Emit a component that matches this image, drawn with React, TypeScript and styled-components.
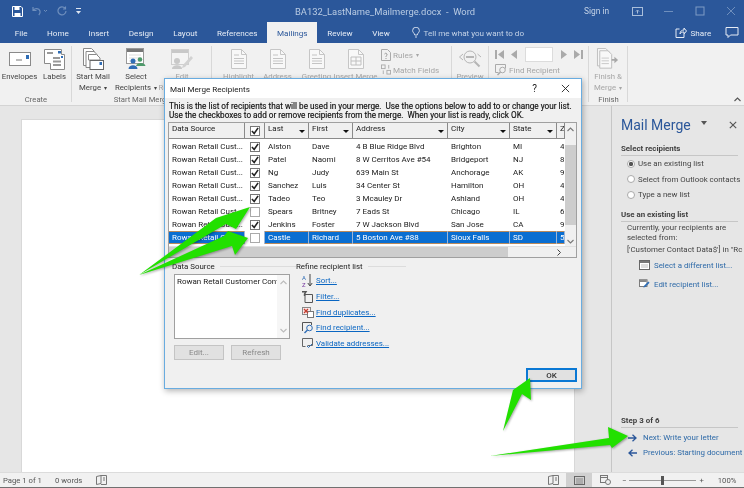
import React from "react";
import styled, { createGlobalStyle } from "styled-components";

const Global = createGlobalStyle`
  html, body { margin: 0; padding: 0; background: #fff; overflow: hidden; }
  * { box-sizing: border-box; }
`;

const Page = styled.div`
  position: relative;
  width: 744px;
  height: 488px;
  overflow: hidden;
  display: flex;
  flex-direction: column;
  font-family: Roboto, "Open Sans", sans-serif;
  font-size: 8px;
  color: #444;
  background: #fff;
  filter: blur(0.25px);
`;

/* ---------- title bar ---------- */
const TitleBar = styled.div`
  height: 22px;
  flex: none;
  background: #2b579a;
  display: flex;
  align-items: center;
  padding: 0 0 0 12px;
  color: #b9cbe3;
  font-size: 9.4px;
`;
const Quick = styled.div`
  display: flex;
  align-items: center;
  gap: 9px;
  width: 283px;
  flex: none;
`;
const DocName = styled.div`
  width: 289px;
  flex: none;
  white-space: pre;
`;
const WindowTools = styled.div`
  display: flex;
  align-items: center;
`;
const SignIn = styled.span`
  width: 38px;
  font-size: 8.4px;
  color: #c3d2e7;
`;
const WinBtn = styled.span`
  width: 31px;
  display: flex;
  justify-content: center;
`;

/* ---------- tabs ---------- */
const TabBar = styled.div`
  height: 21px;
  flex: none;
  background: #2b579a;
  display: flex;
  align-items: stretch;
  padding-left: 5px;
  color: #e6ecf5;
  font-size: 8.1px;
`;
const Tab = styled.div<{ $active?: boolean }>`
  padding: 0 9.8px;
  display: flex;
  align-items: center;
  background: ${(p) => (p.$active ? "#f1f1f1" : "transparent")};
  color: ${(p) => (p.$active ? "#2b579a" : "inherit")};
`;
const Tell = styled.div`
  display: flex;
  align-items: center;
  gap: 4px;
  margin-left: 12px;
  width: 263px;
  flex: none;
  color: #c3d2e7;
`;
const TopAction = styled.div`
  display: flex;
  align-items: center;
  gap: 4px;
  margin-right: 14px;
  color: #e6ecf5;
`;

/* ---------- ribbon ---------- */
const Ribbon = styled.div`
  height: 63px;
  flex: none;
  background: #f1f1f1;
  border-bottom: 1px solid #d4d4d4;
  display: flex;
  position: relative;
`;
const Group = styled.div<{ $w: number }>`
  width: ${(p) => p.$w}px;
  flex: none;
  position: relative;
  display: flex;
  flex-direction: column;
  padding-top: 4px;
  &::after {
    content: "";
    position: absolute;
    right: 0;
    top: 3px;
    bottom: 3px;
    width: 1px;
    background: #d8d8d8;
  }
`;
const GroupItems = styled.div<{ $inset?: number }>`
  flex: 1;
  min-height: 0;
  display: flex;
  align-items: flex-start;
  padding-left: ${(p) => p.$inset ?? 0}px;
`;
const GroupLabel = styled.div`
  height: 12px;
  flex: none;
  line-height: 14px;
  text-align: center;
  font-size: 7.7px;
  color: #666;
  white-space: nowrap;
`;
const RibbonBtn = styled.div<{ $w: number; $off?: boolean }>`
  width: ${(p) => p.$w}px;
  flex: none;
  display: flex;
  flex-direction: column;
  align-items: center;
  text-align: center;
  font-size: 7.8px;
  color: ${(p) => (p.$off ? "#a6a6a6" : "#444")};
  white-space: nowrap;
`;
const BtnText = styled.div`
  line-height: 11px;
`;
const BtnIcon = styled.div`
  height: 24px;
  display: flex;
  align-items: center;
`;
const Mini = styled.div`
  display: flex;
  align-items: center;
  gap: 2px;
  height: 15px;
  color: #a6a6a6;
  font-size: 8.1px;
  white-space: nowrap;
`;
const MiniCol = styled.div`
  display: flex;
  flex-direction: column;
  padding-left: 6px;
`;
const NavRow = styled.div`
  display: flex;
  align-items: center;
  gap: 6px;
  height: 14px;
  margin-bottom: 1px;
  color: #aaa;
`;
const RecordBox = styled.div`
  width: 28px;
  height: 15px;
  flex: none;
  background: #fff;
  border: 1px solid #dcdcdc;
`;
const Caption = styled.span`
  font-size: 6px;
  line-height: 8px;
  margin-left: 1px;
`;
const Collapse = styled.div`
  position: absolute;
  right: 3px;
  bottom: 1px;
`;

/* ---------- workspace ---------- */
const Workspace = styled.div`
  flex: 1;
  min-height: 0;
  display: flex;
  background: #e6e6e6;
`;
const DocArea = styled.div`
  width: 612px;
  flex: none;
  padding: 13px 36px 0 21px;
  border-right: 1px solid #c6c6c6;
`;
const Sheet = styled.div`
  height: 100%;
  background: #fff;
  border: 1px solid #d8d8d8;
  border-bottom: none;
`;
const Pane = styled.div`
  flex: 1;
  min-width: 0;
  padding: 8px 6px 12px 9px;
  display: flex;
  flex-direction: column;
  color: #444;
  font-size: 7.9px;
  white-space: nowrap;
  overflow: hidden;
`;
const PaneHead = styled.div`
  display: flex;
  align-items: center;
  height: 22px;
  color: #2b579a;
  font-size: 14px;
  margin-bottom: 7px;
`;
const PaneCaret = styled.span`
  margin: 0 0 4px 10px;
  width: 0;
  height: 0;
  border: 3.5px solid transparent;
  border-top: 4px solid #555;
  border-bottom: none;
`;
const PaneClose = styled.span`
  margin: 0 0 0 auto;
  padding-right: 1px;
  display: flex;
`;
const PaneHeading = styled.div`
  font-weight: 700;
  color: #404040;
  height: 12px;
  line-height: 12px;
  border-bottom: 1px solid #c6c6c6;
  box-sizing: content-box;
`;
const RadioRow = styled.div`
  display: flex;
  align-items: center;
  gap: 3px;
  height: 15.5px;
  margin-left: 6px;
`;
const Radio = styled.span<{ $on?: boolean }>`
  width: 8px;
  height: 8px;
  flex: none;
  border-radius: 50%;
  border: 1px solid #aaa;
  background: ${(p) => (p.$on ? "radial-gradient(circle, #555 0 2px, #fff 2.3px)" : "#fff")};
`;
const PaneText = styled.div<{ $gap: number }>`
  margin: ${(p) => p.$gap}px 0 0 6px;
  line-height: 10px;
`;
const PaneLink = styled.div<{ $inset: number; $h: number }>`
  display: flex;
  align-items: center;
  gap: 4px;
  height: ${(p) => p.$h}px;
  flex: none;
  margin-left: ${(p) => p.$inset}px;
  color: #2e6aa8;
`;
const LinkIcon = styled.span`
  width: 11px;
  flex: none;
  display: flex;
  align-items: center;
`;
const Grow = styled.div`
  flex: 1;
`;
const Block = styled.div<{ $gap: number }>`
  margin-top: ${(p) => p.$gap}px;
`;

/* ---------- status bar ---------- */
const Status = styled.div`
  height: 15px;
  flex: none;
  background: #f1f1f1;
  border-top: 1px solid #dcdcdc;
  display: flex;
  align-items: center;
  padding-left: 3px;
  font-size: 7.7px;
  color: #555;
`;
const StatusItem = styled.span<{ $w: number }>`
  width: ${(p) => p.$w}px;
  flex: none;
  white-space: nowrap;
  display: flex;
`;
const ViewBtn = styled.span<{ $on?: boolean }>`
  width: 26px;
  height: 14px;
  flex: none;
  display: flex;
  align-items: center;
  justify-content: center;
  background: ${(p) => (p.$on ? "#d0d0d0" : "transparent")};
`;
const Zoom = styled.div`
  display: flex;
  align-items: center;
  gap: 3px;
  margin-left: 4px;
`;
const Track = styled.div`
  width: 67px;
  height: 1px;
  background: #999;
  position: relative;
`;
const Thumb = styled.span`
  position: absolute;
  left: 32px;
  top: -4px;
  width: 3px;
  height: 9px;
  background: #555;
`;
const ZoomText = styled.span`
  margin-left: 11px;
`;
const BottomEdge = styled.div`
  height: 1px;
  flex: none;
  background: #707070;
`;

/* ---------- dialog (floats over the window) ---------- */
const Dialog = styled.div`
  position: absolute;
  left: 164px;
  top: 78px;
  width: 418px;
  height: 311px;
  background: #f0f0f0;
  border: 1px solid #69ace0;
  box-shadow: 1px 2px 6px rgba(0, 0, 0, 0.3);
  display: flex;
  flex-direction: column;
  color: #111;
`;
const DialogTitle = styled.div`
  height: 19px;
  flex: none;
  background: #fff;
  display: flex;
  align-items: center;
  padding: 0 11px 0 5px;
  font-size: 8.1px;
  color: #222;
`;
const Help = styled.span`
  margin-left: auto;
  margin-right: 24px;
  font-size: 10px;
`;
const Intro = styled.div`
  margin: 4px 0 0 4px;
  font-size: 8.2px;
  line-height: 9px;
  height: 20px;
  flex: none;
  white-space: pre;
  color: #111;
  -webkit-text-stroke: 0.15px #111;
`;
const Frame = styled.div`
  margin: 0 4px 0 3px;
  height: 136px;
  flex: none;
  border: 1px solid #a0a0a0;
  background: #fff;
  position: relative;
  overflow: hidden;
  display: flex;
  flex-direction: column;
`;
const cols = "76px 20px 44px 44px 95px 62px 47px 8px";
const HeaderRow = styled.div`
  display: grid;
  grid-template-columns: ${cols};
  height: 16px;
  flex: none;
`;
const HeadCell = styled.div`
  background: #f0f0f0;
  border-right: 1px solid #8a8a8a;
  border-bottom: 1px solid #8a8a8a;
  padding: 0 2px 2px 3px;
  position: relative;
  font-size: 8px;
  line-height: 12px;
  color: #222;
  white-space: nowrap;
  overflow: hidden;
`;
const HeadCheck = styled(HeadCell)`
  padding: 0;
  display: flex;
  align-items: center;
  justify-content: center;
`;
const Caret = styled.span`
  position: absolute;
  right: 3px;
  top: 7px;
  width: 0;
  height: 0;
  border: 3px solid transparent;
  border-top: 3px solid #111;
  border-bottom: none;
`;
const Rows = styled.div`
  padding-top: 1px;
  height: 107px;
  flex: none;
  overflow: hidden;
`;
const Row = styled.div<{ $sel?: boolean }>`
  display: grid;
  grid-template-columns: ${cols};
  height: 13px;
  background: ${(p) => (p.$sel ? "#0a6ed1" : "#fff")};
  color: ${(p) => (p.$sel ? "#fff" : "#222")};
  box-shadow: ${(p) => (p.$sel ? "inset 0 1px 0 #b98a5c, inset 0 -1px 0 #b98a5c" : "none")};
  & > div {
    border-right: 1px solid ${(p) => (p.$sel ? "#9fb6d4" : "transparent")};
  }
`;
const Cell = styled.div`
  padding-left: 3px;
  font-size: 8px;
  line-height: 13px;
  white-space: nowrap;
  overflow: hidden;
`;
const CheckCell = styled.div`
  background: #fff;
  display: flex;
  align-items: center;
  justify-content: center;
`;
const Check = styled.span<{ $on?: boolean }>`
  width: 10px;
  height: 10px;
  flex: none;
  border: 1px solid ${(p) => (p.$on ? "#777" : "#aaa")};
  background: #fff;
  display: flex;
  align-items: center;
  justify-content: center;
`;
const VScroll = styled.div`
  position: absolute;
  right: 0;
  top: 0;
  width: 11px;
  height: 123px;
  background: #f0f0f0;
  display: flex;
  flex-direction: column;
  align-items: center;
  justify-content: space-between;
  padding: 4px 0 2px;
`;
const VThumb = styled.span`
  position: absolute;
  top: 22px;
  left: 0;
  right: 0;
  height: 80px;
  background: #cdcdcd;
`;
const HScroll = styled.div`
  height: 12px;
  flex: none;
  background: #f0f0f0;
  position: relative;
  border-top: 1px solid #e0e0e0;
`;
const HThumb = styled.div`
  width: 339px;
  height: 100%;
  background: #cdcdcd;
`;
const HArrow = styled.span`
  position: absolute;
  right: 15px;
  top: 2px;
  display: flex;
`;
const Lower = styled.div`
  display: flex;
  margin-top: 3px;
  padding-left: 5px;
`;
const SourceCol = styled.div`
  width: 126px;
  flex: none;
`;
const Legend = styled.div`
  display: flex;
  align-items: center;
  gap: 5px;
  height: 11px;
  padding-left: 2px;
  font-size: 7.9px;
  color: #222;
  white-space: nowrap;
  &::after {
    content: "";
    flex: 1;
    height: 1px;
    background: #dcdcdc;
  }
`;
const RefineLegend = styled(Legend)`
  padding-left: 0;
`;
const SourceBox = styled.div`
  margin: 2px 0 0 4px;
  width: 116px;
  height: 65px;
  background: #fff;
  border: 1px solid #a0a0a0;
  padding: 1px 2px;
  font-size: 8px;
  line-height: 11px;
  color: #222;
  position: relative;
  white-space: nowrap;
  overflow: hidden;
`;
const BoxScroll = styled.div`
  position: absolute;
  right: 0;
  top: 0;
  bottom: 0;
  width: 12px;
  background: #f6f6f6;
  display: flex;
  flex-direction: column;
  align-items: center;
  justify-content: space-between;
  padding: 5px 0;
`;
const SourceButtons = styled.div`
  display: flex;
  gap: 7px;
  margin: 6px 0 0 4px;
`;
const GrayBtn = styled.div`
  width: 50px;
  height: 15px;
  background: #e1e1e1;
  border: 1px solid #c4c4c4;
  color: #888;
  display: flex;
  align-items: center;
  justify-content: center;
  font-size: 8px;
`;
const RefineCol = styled.div`
  width: 110px;
  flex: none;
`;
const RefineLinks = styled.div`
  margin-top: 1px;
  padding-left: 6px;
`;
const RefineLink = styled.div`
  display: flex;
  align-items: center;
  gap: 2px;
  height: 15.7px;
  color: #0a66c2;
  font-size: 7.9px;
  white-space: nowrap;
  & > span:last-child {
    text-decoration: underline;
  }
`;
const RefineIcon = styled.span`
  width: 12px;
  flex: none;
  display: flex;
  align-items: center;
`;
const DialogFoot = styled.div`
  margin-top: auto;
  padding: 0 4px 6px 0;
  display: flex;
  justify-content: flex-end;
`;
const OkBtn = styled.div`
  width: 51px;
  height: 14px;
  background: #e1e1e1;
  border: 2px solid #0a78d4;
  color: #333;
  display: flex;
  align-items: center;
  justify-content: center;
  font-size: 8px;
  font-weight: 500;
`;
const Arrows = styled.svg`
  position: absolute;
  left: 0;
  top: 0;
  width: 744px;
  height: 488px;
  pointer-events: none;
  filter: drop-shadow(1px 1px 1px rgba(0, 0, 0, 0.35));
`;

/* ---------- icons ---------- */
const Save = () => (
  <svg width="11" height="11" viewBox="0 0 11 11">
    <path d="M.5.5h8.500l1.500 1.500v8.500H.5z" fill="none" stroke="#fff" />
    <path d="M2.500 1h5v3h-5zM2.500 7h6v3.500h-6z" fill="#fff" />
  </svg>
);
const Undo = () => (
  <svg width="16" height="10" viewBox="0 0 16 10" fill="none" stroke="#6f8fbd" strokeWidth="1.2">
    <path d="M1 1v3.500h3.500M1.300 4.300C3 2 7 2 8 5c.4 1.500-.2 3-1.200 4" />
    <path d="M12 4l1.500 1.500L15 4" strokeWidth="1" />
  </svg>
);
const Redo = () => (
  <svg width="10" height="10" viewBox="0 0 10 10" fill="none" stroke="#6f8fbd" strokeWidth="1.2">
    <path d="M8 2.200A4 4 0 1 0 9 5M8.500.5v2.500H6" />
  </svg>
);
const Customize = () => (
  <svg width="5" height="6" viewBox="0 0 5 6" fill="#dfe7f2">
    <rect y="0" width="5" height="1" />
    <path d="M0 3h5L2.500 6z" />
  </svg>
);
const RibbonDisplay = () => (
  <svg width="11" height="9" viewBox="0 0 11 9" fill="none" stroke="#a9bedb">
    <rect x=".5" y=".5" width="10" height="8" />
    <path d="M5.500 6.500v-3M4 4.500l1.500-1.500L7 4.500" />
  </svg>
);
const Minimize = () => (
  <svg width="10" height="10" viewBox="0 0 10 10"><path d="M0 5.500h9" stroke="#6f8fbd" /></svg>
);
const Restore = () => (
  <svg width="10" height="10" viewBox="0 0 10 10"><rect x="1" y="1" width="8" height="8" fill="none" stroke="#7f9bc4" /></svg>
);
const XIcon = ({ c = "#6f8fbd", s = 10, w = 1 }: { c?: string; s?: number; w?: number }) => (
  <svg width={s} height={s} viewBox="0 0 10 10"><path d="M1 1l8 8M9 1l-8 8" stroke={c} strokeWidth={w} /></svg>
);
const Bulb = () => (
  <svg width="8" height="11" viewBox="0 0 8 11" fill="none" stroke="#dfe7f2" strokeWidth=".9">
    <path d="M2.700 8C2.500 6 .6 5.600.6 3.600a3.400 3.400 0 0 1 6.800 0C7.400 5.600 5.500 6 5.300 8zM3 10h2" />
  </svg>
);
const ShareIcon = () => (
  <svg width="12" height="11" viewBox="0 0 11 11" fill="none" stroke="#e6ecf5">
    <path d="M4 2H.5v8.500h8V7M4.500 7c0-3 2-4 4-4V1l2.500 3-2.500 3V5C6.500 5 5 5.500 4.500 7z" />
  </svg>
);
const Comment = () => (
  <svg width="14" height="11" viewBox="0 0 13 11" fill="none" stroke="#e6ecf5">
    <path d="M.5.500h12v7.500H5L2.500 10.500V8H.5z" />
  </svg>
);
const Envelope = () => (
  <svg width="22" height="14" viewBox="0 0 22 14">
    <rect x=".5" y=".5" width="21" height="13" fill="#fff" stroke="#8a8a8a" />
    <rect x="17" y="3" width="3" height="4" fill="#2f6db5" />
    <path d="M7 8h6" stroke="#777" />
  </svg>
);
const LabelsIcon = () => (
  <svg width="21" height="21" viewBox="0 0 21 21">
    <path d="M.5.500h17v5h3v15h-14v-6h-6z" fill="#fff" stroke="#8a8a8a" />
    <rect x="14" y="2" width="3" height="2.500" fill="#2f6db5" />
    <rect x="17" y="7" width="2" height="2" fill="#2f6db5" />
    <path d="M3 4h6M9 9h7M9 12.500h8M9 16h8" stroke="#999" strokeWidth="2" />
  </svg>
);
const StartMerge = () => (
  <svg width="21" height="23" viewBox="0 0 21 23">
    <path d="M.5.500h8l3 3v14H.5z" fill="#fff" stroke="#888" />
    <path d="M3 3.500h8l3 3v13H3z" fill="#fff" stroke="#888" />
    <path d="M5.500 6.500h8l3.500 3.500v2H5.500z" fill="#fff" stroke="#888" />
    <rect x="7" y="12.500" width="13.500" height="9" fill="#fff" stroke="#666" />
    <rect x="16.500" y="14" width="2.500" height="3" fill="#2f6db5" />
  </svg>
);
const SelectRec = () => (
  <svg width="20" height="22" viewBox="0 0 20 22">
    <rect x=".5" y=".5" width="17" height="15" fill="#fff" stroke="#999" />
    <rect x="1" y="1" width="16" height="3" fill="#777" />
    <path d="M3 7h12M3 10h12M3 13h12" stroke="#ddd" />
    <circle cx="7" cy="13" r="2.500" fill="#2f6db5" />
    <path d="M2.500 21c0-5 9-5 9 0z" fill="#2f6db5" />
    <circle cx="14" cy="11.500" r="2.300" fill="#4d9a6a" />
    <path d="M10 18c.5-4 9-4 9.500 0z" fill="#4d9a6a" />
  </svg>
);
const EditRec = () => (
  <svg width="22" height="21" viewBox="0 0 22 21" opacity=".75">
    <rect x=".5" y=".5" width="17" height="15" fill="#f6f6f6" stroke="#c4c4c4" />
    <rect x="1" y="1" width="16" height="3" fill="#bbb" />
    <circle cx="6" cy="12" r="3" fill="#bcbcbc" />
    <path d="M1 20c0-5 10-5 10 0z" fill="#bcbcbc" />
    <path d="M12 16l8-9 2 2-8 9-3 1z" fill="#c8c8c8" />
  </svg>
);
const DocIcon = ({ tall = false }: { tall?: boolean }) => (
  <svg width="16" height="20" viewBox="0 0 16 20">
    <path d="M.5.500h10l5 5v14H.5z" fill="#f8f8f8" stroke="#c6c6c6" />
    <path d="M10.500.5v5h5" fill="none" stroke="#c6c6c6" />
    {tall ? (
      <path d="M3 8h10v8H3zM3 12h10M8 8v8" fill="none" stroke="#c0c0c0" />
    ) : (
      <path d="M3 6h5M3 9.500h10M3 12h10M3 14.500h10" stroke="#c4c4c4" />
    )}
  </svg>
);
const RulesIcon = () => (
  <svg width="10" height="12" viewBox="0 0 10 12" fill="none" stroke="#aaa">
    <path d="M.5.500h6l3 3v8h-9z" />
    <path d="M3.500 5c1-1.500 3-.5 2.500 1-.4.800-1 .800-1 2M5 9v1" stroke="#999" />
  </svg>
);
const MatchIcon = () => (
  <svg width="10" height="11" viewBox="0 0 11 11" fill="none" stroke="#aaa">
    <rect x=".5" y=".5" width="4" height="4" />
    <rect x="6.500" y="6.500" width="4" height="4" />
    <path d="M8.500.5v4M2.500 6.500v4" />
  </svg>
);
const PreviewIcon = () => (
  <svg width="24" height="22" viewBox="0 0 24 22" fill="none" stroke="#b5b5b5">
    <circle cx="12" cy="9" r="6" />
    <path d="M16.500 13.500l5 5" strokeWidth="2" />
    <path d="M5 6L1.500 9 5 12M19.500 6L23 9" />
    <path d="M8 9h8" strokeWidth="2" />
  </svg>
);
const FindRecIcon = () => (
  <svg width="12" height="12" viewBox="0 0 12 12" fill="none" stroke="#aaa">
    <path d="M.5.500h10v4M.5.500v8h3" />
    <circle cx="7.500" cy="6" r="2.800" />
    <path d="M5.500 8L2.500 11" strokeWidth="1.500" />
  </svg>
);
const NavArrow = ({ dir, bar }: { dir: "l" | "r"; bar?: boolean }) => (
  <svg width="9" height="9" viewBox="0 0 9 9" fill="#aaa">
    {dir === "l" ? (
      <>
        {bar && <rect x="0" y="0" width="2" height="9" />}
        <path d={bar ? "M9 0v9L3 4.500z" : "M7 0v9L1 4.500z"} />
      </>
    ) : (
      <>
        {bar && <rect x="7" y="0" width="2" height="9" />}
        <path d={bar ? "M0 0v9l6-4.500z" : "M2 0v9l6-4.500z"} />
      </>
    )}
  </svg>
);
const FinishIcon = () => (
  <svg width="24" height="22" viewBox="0 0 24 24">
    <path d="M.5.500h9l4 4v15H.5z" fill="#f6f6f6" stroke="#bbb" />
    <path d="M3 3h9l4 4v15H3z" fill="#f8f8f8" stroke="#bbb" />
    <path d="M5 11h8M5 14h8M5 17h8" stroke="#c6c6c6" />
    <path d="M16 12h3V9.500l4 3.500-4 3.500V14h-3z" fill="#a8a8a8" />
  </svg>
);
const Chevron = ({ up, c = "#777" }: { up?: boolean; c?: string }) => (
  <svg width="7" height="5" viewBox="0 0 7 5" fill="none" stroke={c} strokeWidth="1.100" style={{ position: "relative" }}>
    <path d={up ? "M.5 4L3.500 1l3 3" : "M.5 1l3 3 3-3"} />
  </svg>
);
const Tick = () => (
  <svg width="8" height="8" viewBox="0 0 7 7" fill="none" stroke="#222" strokeWidth="1.400">
    <path d="M.8 3.500l2 2.200L6.200.8" />
  </svg>
);
const SortIcon = () => (
  <svg width="11" height="13" viewBox="0 0 11 13">
    <path d="M8 0v11M5.800 9L8 12l2.200-3" fill="none" stroke="#444" />
    <text x="0" y="6" fontSize="6" fontFamily="Roboto" fill="#2f6db5">A</text>
    <text x="0" y="12.500" fontSize="6" fontFamily="Roboto" fill="#7a3fa0">Z</text>
  </svg>
);
const FilterIcon = () => (
  <svg width="11" height="12" viewBox="0 0 11 12" fill="none" stroke="#555">
    <path d="M2.500 3.500h8v8h-7.500v-8" />
    <path d="M0 .800h4L2.500 3v2" strokeWidth="1.400" />
  </svg>
);
const DupIcon = () => (
  <svg width="12" height="11" viewBox="0 0 12 11" fill="none">
    <rect x=".5" y=".5" width="8" height="7" stroke="#888" fill="#fbeaea" />
    <rect x="5.500" y="4.500" width="6" height="6" stroke="#777" fill="#fff" />
    <path d="M2 2l4 4M6 2L2 6" stroke="#c43c2e" strokeWidth="1.300" />
  </svg>
);
const FindIcon = () => (
  <svg width="12" height="12" viewBox="0 0 12 12" fill="none">
    <path d="M.5 9V.5h9V3" stroke="#555" />
    <circle cx="7.500" cy="6" r="2.800" stroke="#2f6db5" />
    <path d="M5.500 8L2.500 11" stroke="#2f6db5" strokeWidth="1.500" />
  </svg>
);
const ValidateIcon = () => (
  <svg width="12" height="11" viewBox="0 0 12 11" fill="none">
    <path d="M.5.500h10v7h-5M.5.500v8h3" stroke="#666" />
    <path d="M5 8l1.500 1.500L10 6" stroke="#2f6db5" />
  </svg>
);
const CalIcon = () => (
  <svg width="11" height="10" viewBox="0 0 11 10">
    <rect x=".5" y=".5" width="10" height="9" fill="#fff" stroke="#666" />
    <rect x="1" y="1" width="9" height="2" fill="#777" />
    <path d="M2 5h7M2 7h7" stroke="#bbb" />
  </svg>
);
const EditListIcon = () => (
  <svg width="11" height="10" viewBox="0 0 13 11">
    <rect x=".5" y=".5" width="9" height="8" fill="#fff" stroke="#666" />
    <rect x="1" y="1" width="8" height="2" fill="#777" />
    <path d="M5 9.500l1-2 5-5 1.500 1.500-5 5z" fill="#2f6db5" />
  </svg>
);
const ArrowNext = () => (
  <svg width="9" height="8" viewBox="0 0 9 8" fill="none" stroke="#2b579a" strokeWidth="1.300">
    <path d="M0 4h8M4.500.8L8 4 4.500 7.200" />
  </svg>
);
const ArrowPrev = () => (
  <svg width="9" height="8" viewBox="0 0 9 8" fill="none" stroke="#2b579a" strokeWidth="1.300">
    <path d="M9 4H1M4.500.8L1 4l3.500 3.200" />
  </svg>
);
const BookIcon = () => (
  <svg width="11" height="10" viewBox="0 0 11 10" fill="none" stroke="#777">
    <path d="M.5 1.500l4.500-1v8l-4.500 1zM5 .5h5.500v9H5" />
    <path d="M7 3h2M7 5h2" />
  </svg>
);
const PrintIcon = () => (
  <svg width="11" height="9" viewBox="0 0 11 9" fill="none" stroke="#666">
    <rect x=".5" y=".5" width="10" height="8" />
    <path d="M2 3h7M2 5h7M2 7h7" stroke="#888" />
  </svg>
);
const WebIcon = () => (
  <svg width="11" height="10" viewBox="0 0 11 10" fill="none" stroke="#777">
    <rect x=".5" y=".5" width="7" height="7" />
    <path d="M.5 2.500h7" />
    <circle cx="8" cy="7" r="2.500" fill="#f1f1f1" />
  </svg>
);

const recipients = [
  ["Alston", "Dave", "4 B Blue Ridge Blvd", "Brighton", "MI", "4", true],
  ["Patel", "Naomi", "8 W Cerritos Ave #54", "Bridgeport", "NJ", "8", true],
  ["Ng", "Judy", "639 Main St", "Anchorage", "AK", "9", true],
  ["Sanchez", "Luis", "34 Center St", "Hamilton", "OH", "4", true],
  ["Tadeo", "Teo", "3 Mcauley Dr", "Ashland", "OH", "4", true],
  ["Spears", "Britney", "7 Eads St", "Chicago", "IL", "6", false],
  ["Jenkins", "Foster", "7 W Jackson Blvd", "San Jose", "CA", "9", true],
  ["Castle", "Richard", "5 Boston Ave #88", "Sioux Falls", "SD", "5", false],
  ["Sandler", "Adam", "228 Runamuck Pl #2808", "Baltimore", "MD", "2", false],
] as const;

const tabs = ["File", "Home", "Insert", "Design", "Layout", "References", "Mailings", "Review", "View"];

export default function App() {
  return (
    <Page>
      <Global />
      <TitleBar>
        <Quick>
          <Save />
          <Undo />
          <Redo />
          <Customize />
        </Quick>
        <DocName>{"BA132_LastName_Mailmerge.docx  -  Word"}</DocName>
        <WindowTools>
          <SignIn>Sign in</SignIn>
          <WinBtn><RibbonDisplay /></WinBtn>
          <WinBtn><Minimize /></WinBtn>
          <WinBtn><Restore /></WinBtn>
          <WinBtn><XIcon /></WinBtn>
        </WindowTools>
      </TitleBar>
      <TabBar>
        {tabs.map((t) => (
          <Tab key={t} $active={t === "Mailings"}>{t}</Tab>
        ))}
        <Tell><Bulb />Tell me what you want to do</Tell>
        <TopAction><ShareIcon />Share</TopAction>
        <TopAction><Comment /></TopAction>
      </TabBar>
      <Ribbon>
        <Group $w={72}>
          <GroupItems>
            <RibbonBtn $w={39}><BtnIcon><Envelope /></BtnIcon><BtnText>Envelopes</BtnText></RibbonBtn>
            <RibbonBtn $w={31}><BtnIcon><LabelsIcon /></BtnIcon><BtnText>Labels</BtnText></RibbonBtn>
          </GroupItems>
          <GroupLabel>Create</GroupLabel>
        </Group>
        <Group $w={140}>
          <GroupItems>
            <RibbonBtn $w={42}><BtnIcon><StartMerge /></BtnIcon><BtnText>Start Mail<br />Merge <Caption>▾</Caption></BtnText></RibbonBtn>
            <RibbonBtn $w={44}><BtnIcon><SelectRec /></BtnIcon><BtnText>Select<br />Recipients <Caption>▾</Caption></BtnText></RibbonBtn>
            <RibbonBtn $w={48} $off><BtnIcon><EditRec /></BtnIcon><BtnText>Edit<br />Recipient List</BtnText></RibbonBtn>
          </GroupItems>
          <GroupLabel>Start Mail Merge</GroupLabel>
        </Group>
        <Group $w={240}>
          <GroupItems $inset={7}>
            <RibbonBtn $w={39} $off><BtnIcon><DocIcon /></BtnIcon><BtnText>Highlight</BtnText></RibbonBtn>
            <RibbonBtn $w={39} $off><BtnIcon><DocIcon /></BtnIcon><BtnText>Address</BtnText></RibbonBtn>
            <RibbonBtn $w={39} $off><BtnIcon><DocIcon /></BtnIcon><BtnText>Greeting</BtnText></RibbonBtn>
            <RibbonBtn $w={39} $off><BtnIcon><DocIcon tall /></BtnIcon><BtnText>Insert Merge</BtnText></RibbonBtn>
            <MiniCol>
              <Mini><RulesIcon />Rules <Caption>▾</Caption></Mini>
              <Mini><MatchIcon />Match Fields</Mini>
            </MiniCol>
          </GroupItems>
        </Group>
        <Group $w={37}>
          <GroupItems>
            <RibbonBtn $w={36} $off><BtnIcon><PreviewIcon /></BtnIcon><BtnText>Preview</BtnText></RibbonBtn>
          </GroupItems>
        </Group>
        <Group $w={100}>
          <MiniCol>
            <NavRow>
              <NavArrow dir="l" bar />
              <NavArrow dir="l" />
              <RecordBox />
              <NavArrow dir="r" />
              <NavArrow dir="r" bar />
            </NavRow>
            <Mini><FindRecIcon />Find Recipient</Mini>
          </MiniCol>
        </Group>
        <Group $w={39}>
          <GroupItems>
            <RibbonBtn $w={38} $off><BtnIcon><FinishIcon /></BtnIcon><BtnText>Finish &amp;<br />Merge <Caption>▾</Caption></BtnText></RibbonBtn>
          </GroupItems>
          <GroupLabel>Finish</GroupLabel>
        </Group>
        <Collapse><Chevron up c="#555" /></Collapse>
      </Ribbon>
      <Workspace>
        <DocArea><Sheet /></DocArea>
        <Pane>
          <PaneHead>
            Mail Merge
            <PaneCaret />
            <PaneClose><XIcon c="#555" s={8} w={1.4} /></PaneClose>
          </PaneHead>
          <PaneHeading>Select recipients</PaneHeading>
          <Block $gap={0}>
            <RadioRow><Radio $on />Use an existing list</RadioRow>
            <RadioRow><Radio />Select from Outlook contacts</RadioRow>
            <RadioRow><Radio />Type a new list</RadioRow>
          </Block>
          <Block $gap={6}>
            <PaneHeading>Use an existing list</PaneHeading>
          </Block>
          <PaneText $gap={1}>Currently, your recipients are<br />selected from:</PaneText>
          <PaneText $gap={2}>['Customer Contact Data$'] in "Rc</PaneText>
          <Block $gap={1}>
            <PaneLink $inset={18} $h={19}><LinkIcon><CalIcon /></LinkIcon><span>Select a different list...</span></PaneLink>
            <PaneLink $inset={18} $h={19}><LinkIcon><EditListIcon /></LinkIcon><span>Edit recipient list...</span></PaneLink>
          </Block>
          <Grow />
          <PaneHeading>Step 3 of 6</PaneHeading>
          <Block $gap={2}>
            <PaneLink $inset={7} $h={15}><LinkIcon><ArrowNext /></LinkIcon><span>Next: Write your letter</span></PaneLink>
            <PaneLink $inset={7} $h={15}><LinkIcon><ArrowPrev /></LinkIcon><span>Previous: Starting document</span></PaneLink>
          </Block>
        </Pane>
      </Workspace>
      <Status>
        <StatusItem $w={52}>Page 1 of 1</StatusItem>
        <StatusItem $w={41}>0 words</StatusItem>
        <StatusItem $w={444}><BookIcon /></StatusItem>
        <ViewBtn><BookIcon /></ViewBtn>
        <ViewBtn $on><PrintIcon /></ViewBtn>
        <ViewBtn><WebIcon /></ViewBtn>
        <Zoom>
          <span>−</span>
          <Track><Thumb /></Track>
          <span>+</span>
          <ZoomText>100%</ZoomText>
        </Zoom>
      </Status>
      <BottomEdge />

      <Dialog>
        <DialogTitle>
          Mail Merge Recipients
          <Help>?</Help>
          <XIcon c="#222" s={9} />
        </DialogTitle>
        <Intro>
          {"This is the list of recipients that will be used in your merge.  Use the options below to add to or change your list.\nUse the checkboxes to add or remove recipients from the merge.  When your list is ready, click OK."}
        </Intro>
        <Frame>
          <HeaderRow>
            <HeadCell>Data Source</HeadCell>
            <HeadCheck><Check $on><Tick /></Check></HeadCheck>
            <HeadCell>Last<Caret /></HeadCell>
            <HeadCell>First<Caret /></HeadCell>
            <HeadCell>Address<Caret /></HeadCell>
            <HeadCell>City<Caret /></HeadCell>
            <HeadCell>State<Caret /></HeadCell>
            <HeadCell>Z</HeadCell>
          </HeaderRow>
          <Rows>
            {recipients.map((r, i) => (
              <Row key={r[0]} $sel={i === 7}>
                <Cell>Rowan Retail Cust...</Cell>
                <CheckCell><Check $on={r[6]}>{r[6] && <Tick />}</Check></CheckCell>
                <Cell>{r[0]}</Cell>
                <Cell>{r[1]}</Cell>
                <Cell>{r[2]}</Cell>
                <Cell>{r[3]}</Cell>
                <Cell>{r[4]}</Cell>
                <Cell>{r[5]}</Cell>
              </Row>
            ))}
          </Rows>
          <VScroll>
            <VThumb />
            <Chevron up />
            <Chevron />
          </VScroll>
          <HScroll>
            <HThumb />
            <HArrow>
              <svg width="4" height="7" viewBox="0 0 4 7" fill="none" stroke="#444"><path d="M.5.500l3 3-3 3" /></svg>
            </HArrow>
          </HScroll>
        </Frame>
        <Lower>
          <SourceCol>
            <Legend>Data Source</Legend>
            <SourceBox>
              Rowan Retail Customer Cont
              <BoxScroll>
                <Chevron up c="#bbb" />
                <Chevron c="#bbb" />
              </BoxScroll>
            </SourceBox>
            <SourceButtons>
              <GrayBtn>Edit...</GrayBtn>
              <GrayBtn>Refresh</GrayBtn>
            </SourceButtons>
          </SourceCol>
          <RefineCol>
            <RefineLegend>Refine recipient list</RefineLegend>
            <RefineLinks>
              <RefineLink><RefineIcon><SortIcon /></RefineIcon><span>Sort...</span></RefineLink>
              <RefineLink><RefineIcon><FilterIcon /></RefineIcon><span>Filter...</span></RefineLink>
              <RefineLink><RefineIcon><DupIcon /></RefineIcon><span>Find duplicates...</span></RefineLink>
              <RefineLink><RefineIcon><FindIcon /></RefineIcon><span>Find recipient...</span></RefineLink>
              <RefineLink><RefineIcon><ValidateIcon /></RefineIcon><span>Validate addresses...</span></RefineLink>
            </RefineLinks>
          </RefineCol>
        </Lower>
        <DialogFoot>
          <OkBtn>OK</OkBtn>
        </DialogFoot>
      </Dialog>

      <Arrows viewBox="0 0 744 488">
        <path d="M139 275L216 218L250 207L236 229L226 224Z" fill="#22e000" />
        <path d="M139 275L224 236L228 231L248 238L235 255L232 246Z" fill="#22e000" />
        <path d="M503 431L513 390L530 378L531 400L522 394Z" fill="#22e000" />
        <path d="M490 456L609 438L608 427L628 436L612 448L610 445Z" fill="#22e000" />
      </Arrows>
    </Page>
  );
}
